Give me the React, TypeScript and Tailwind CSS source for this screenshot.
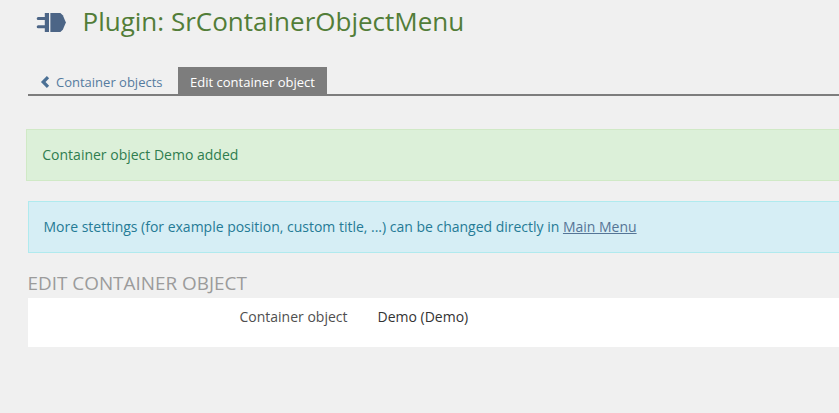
function PlugIcon() {
  return (
    <svg width="30" height="20" viewBox="0 0 30 20" fill="#4c6586" aria-hidden="true">
      <path d="M8.8 0H13v19H8.8v-3.7H2.2a1.5 1.5 0 0 1 0-3H8.8V7.1H2.2a1.5 1.5 0 0 1 0-3H8.8z" />
      <path d="M14.4 0h10l2.4 2.2 3.1 7.3-3.1 7.3-2.4 2.2h-10z" />
    </svg>
  );
}

function BackChevron() {
  return (
    <svg width="10" height="12" viewBox="0 0 10 12" fill="none" stroke="#4b7095" strokeWidth="3.2" aria-hidden="true">
      <path d="M8 1.2 3.2 6 8 10.8" />
    </svg>
  );
}

export default function App() {
  return (
    <div className="h-[413px] w-full overflow-hidden bg-[#f0f0f0] pl-[28px] text-[14px] whitespace-nowrap text-[#161616] [font-family:'Open_Sans',sans-serif]">
      <header className="flex h-[67px] items-start pl-2">
        <div className="pt-[13px]">
          <PlugIcon />
        </div>
        <h1 className="ml-[16.5px] pt-[3px] text-[26.03px] leading-[36px] text-[#527d38]">Plugin: SrContainerObjectMenu</h1>
      </header>

      <nav className="flex h-[29px] border-b-2 border-[#7d7d7d] text-[13px] leading-[20px]">
        <a className="flex h-[27px] w-[150px] items-start pt-[5px] pl-[12px] text-[#557b9f]">
          <span className="mr-[6px] pt-[4px]">
            <BackChevron />
          </span>
          Container objects
        </a>
        <a className="h-[27px] w-[149px] bg-[#7d7d7d] pt-[5px] text-center text-white">Edit container object</a>
      </nav>

      <div className="mt-[33px] -ml-[2px] h-[52px] border border-r-0 border-[#d0e9c6] bg-[#dcf0d9] px-[15.3px] pt-[15px] leading-[20px] text-[#2f7d4f]">
        Container object Demo added
      </div>

      <div className="mt-[20px] h-[52px] border border-r-0 border-[#b0eaee] bg-[#d6eef5] px-[14.5px] pt-[15px] leading-[20px] tracking-[-0.01px] text-[#257b96]">
        More stettings (for example position, custom title, ...) can be changed directly in{" "}
        <a className="text-[#557596] underline">Main Menu</a>
      </div>

      <h2 className="mt-[18px] -ml-[0.5px] h-[27px] text-[18.9px] leading-[25px] text-[#9b9b9b]">EDIT CONTAINER OBJECT</h2>
      <div className="flex h-[49px] bg-white pt-[9px] leading-[20px]">
        <div className="w-[319.5px] text-right text-[#4f4f4f]">Container object</div>
        <div className="ml-[30px] text-[#333]">Demo (Demo)</div>
      </div>
    </div>
  );
}
